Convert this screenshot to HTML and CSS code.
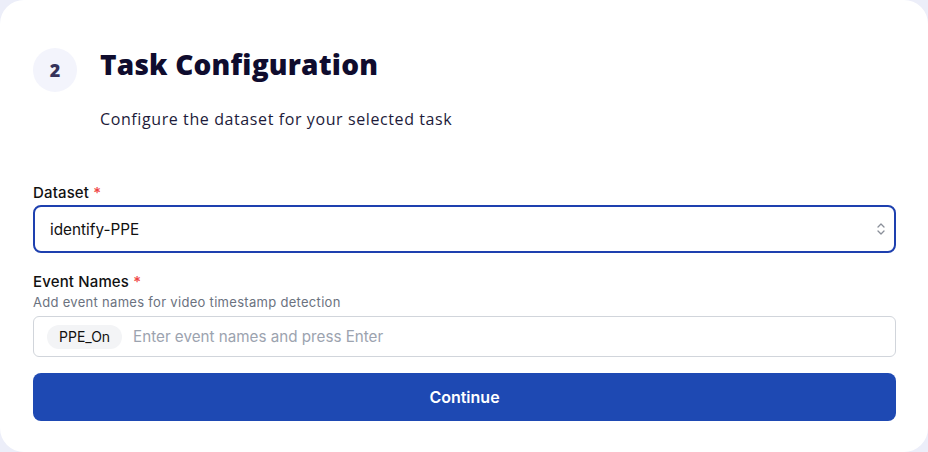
FILE: index.html
```html
<!DOCTYPE html>
<html>
<head>
<meta charset="utf-8">
<link rel="stylesheet" href="styles.css">
</head>
<body>
<div class="card">
  <div class="header">
    <div class="step">2</div>
    <div class="titles">
      <h1 class="title">Task Configuration</h1>
      <p class="subtitle">Configure the dataset for your selected task</p>
    </div>
  </div>

  <div class="field">
    <label class="label">Dataset <span class="req">*</span></label>
    <div class="select">
      <span>identify-PPE</span>
      <svg class="chev" width="10" height="14" viewBox="0 0 10 14" fill="none" stroke="#8a8f99" stroke-width="1.3" stroke-linecap="round" stroke-linejoin="round">
        <path d="M2 5 L5 2 L8 5"/>
        <path d="M2 9 L5 12 L8 9"/>
      </svg>
    </div>
  </div>

  <div class="field field-events">
    <label class="label">Event Names <span class="req">*</span></label>
    <div class="hint">Add event names for video timestamp detection</div>
    <div class="tags">
      <span class="chip">PPE_On</span>
      <span class="placeholder">Enter event names and press Enter</span>
    </div>
  </div>

  <button class="btn">Continue</button>
</div>
</body>
</html>
```
FILE: styles.css
```css
html, body {
  margin: 0;
  padding: 0;
}
body {
  background: #eceef9;
  width: 928px;
  height: 452px;
  overflow: hidden;
  font-family: Inter, "Liberation Sans", sans-serif;
}
.card {
  box-sizing: border-box;
  width: 928px;
  height: 452px;
  background: #ffffff;
  border-radius: 24px;
  padding: 48px 32px 0 33px;
  display: flex;
  flex-direction: column;
}
.header {
  display: flex;
  gap: 23px;
  align-items: flex-start;
}
.step {
  width: 44px;
  height: 44px;
  border-radius: 50%;
  background: #f3f4fc;
  color: #35325a;
  font-family: "Open Sans", sans-serif;
  font-weight: 800;
  font-size: 18px;
  display: flex;
  align-items: center;
  justify-content: center;
  flex: none;
}
.titles {
  display: flex;
  flex-direction: column;
}
.title {
  margin: 0;
  margin-top: -3px;
  font-family: "Open Sans", sans-serif;
  font-weight: 800;
  font-size: 28px;
  line-height: 38px;
  color: #0f0c2e;
  letter-spacing: 0.2px;
}
.subtitle {
  margin: 25px 0 0;
  font-family: "Open Sans", sans-serif;
  font-size: 16px;
  line-height: 22px;
  color: #1d1b3a;
  letter-spacing: 0.6px;
}
.field {
  margin-top: 53px;
  display: flex;
  flex-direction: column;
}
.field-events {
  margin-top: 19px;
}
.label {
  font-size: 15px;
  font-weight: 500;
  color: #111111;
  line-height: 20px;
  margin-bottom: 2px;
  letter-spacing: 0.15px;
}
.req {
  color: #ef4444;
}
.select {
  box-sizing: border-box;
  height: 48px;
  border: 2px solid #1e40af;
  border-radius: 8px;
  display: flex;
  align-items: center;
  justify-content: space-between;
  padding: 0 8px 0 15px;
  font-size: 15.3px;
  color: #111111;
}
.hint {
  font-size: 13px;
  color: #6b7280;
  line-height: 16px;
  margin-top: 0;
  margin-bottom: 6px;
  letter-spacing: 0.3px;
}
.tags {
  box-sizing: border-box;
  height: 41px;
  border: 1px solid #d1d5db;
  border-radius: 6px;
  display: flex;
  align-items: center;
  gap: 11px;
  padding: 0 13px;
}
.chip {
  background: #f3f4f6;
  border-radius: 12px;
  padding: 3px 12px;
  font-size: 14px;
  color: #111111;
  line-height: 18px;
}
.placeholder {
  font-size: 15.2px;
  color: #9ca3af;
}
.btn {
  margin-top: 16px;
  height: 48px;
  border: none;
  border-radius: 8px;
  background: #1e49b3;
  color: #ffffff;
  font-family: Inter, "Liberation Sans", sans-serif;
  font-size: 16px;
  font-weight: 600;
}
```
